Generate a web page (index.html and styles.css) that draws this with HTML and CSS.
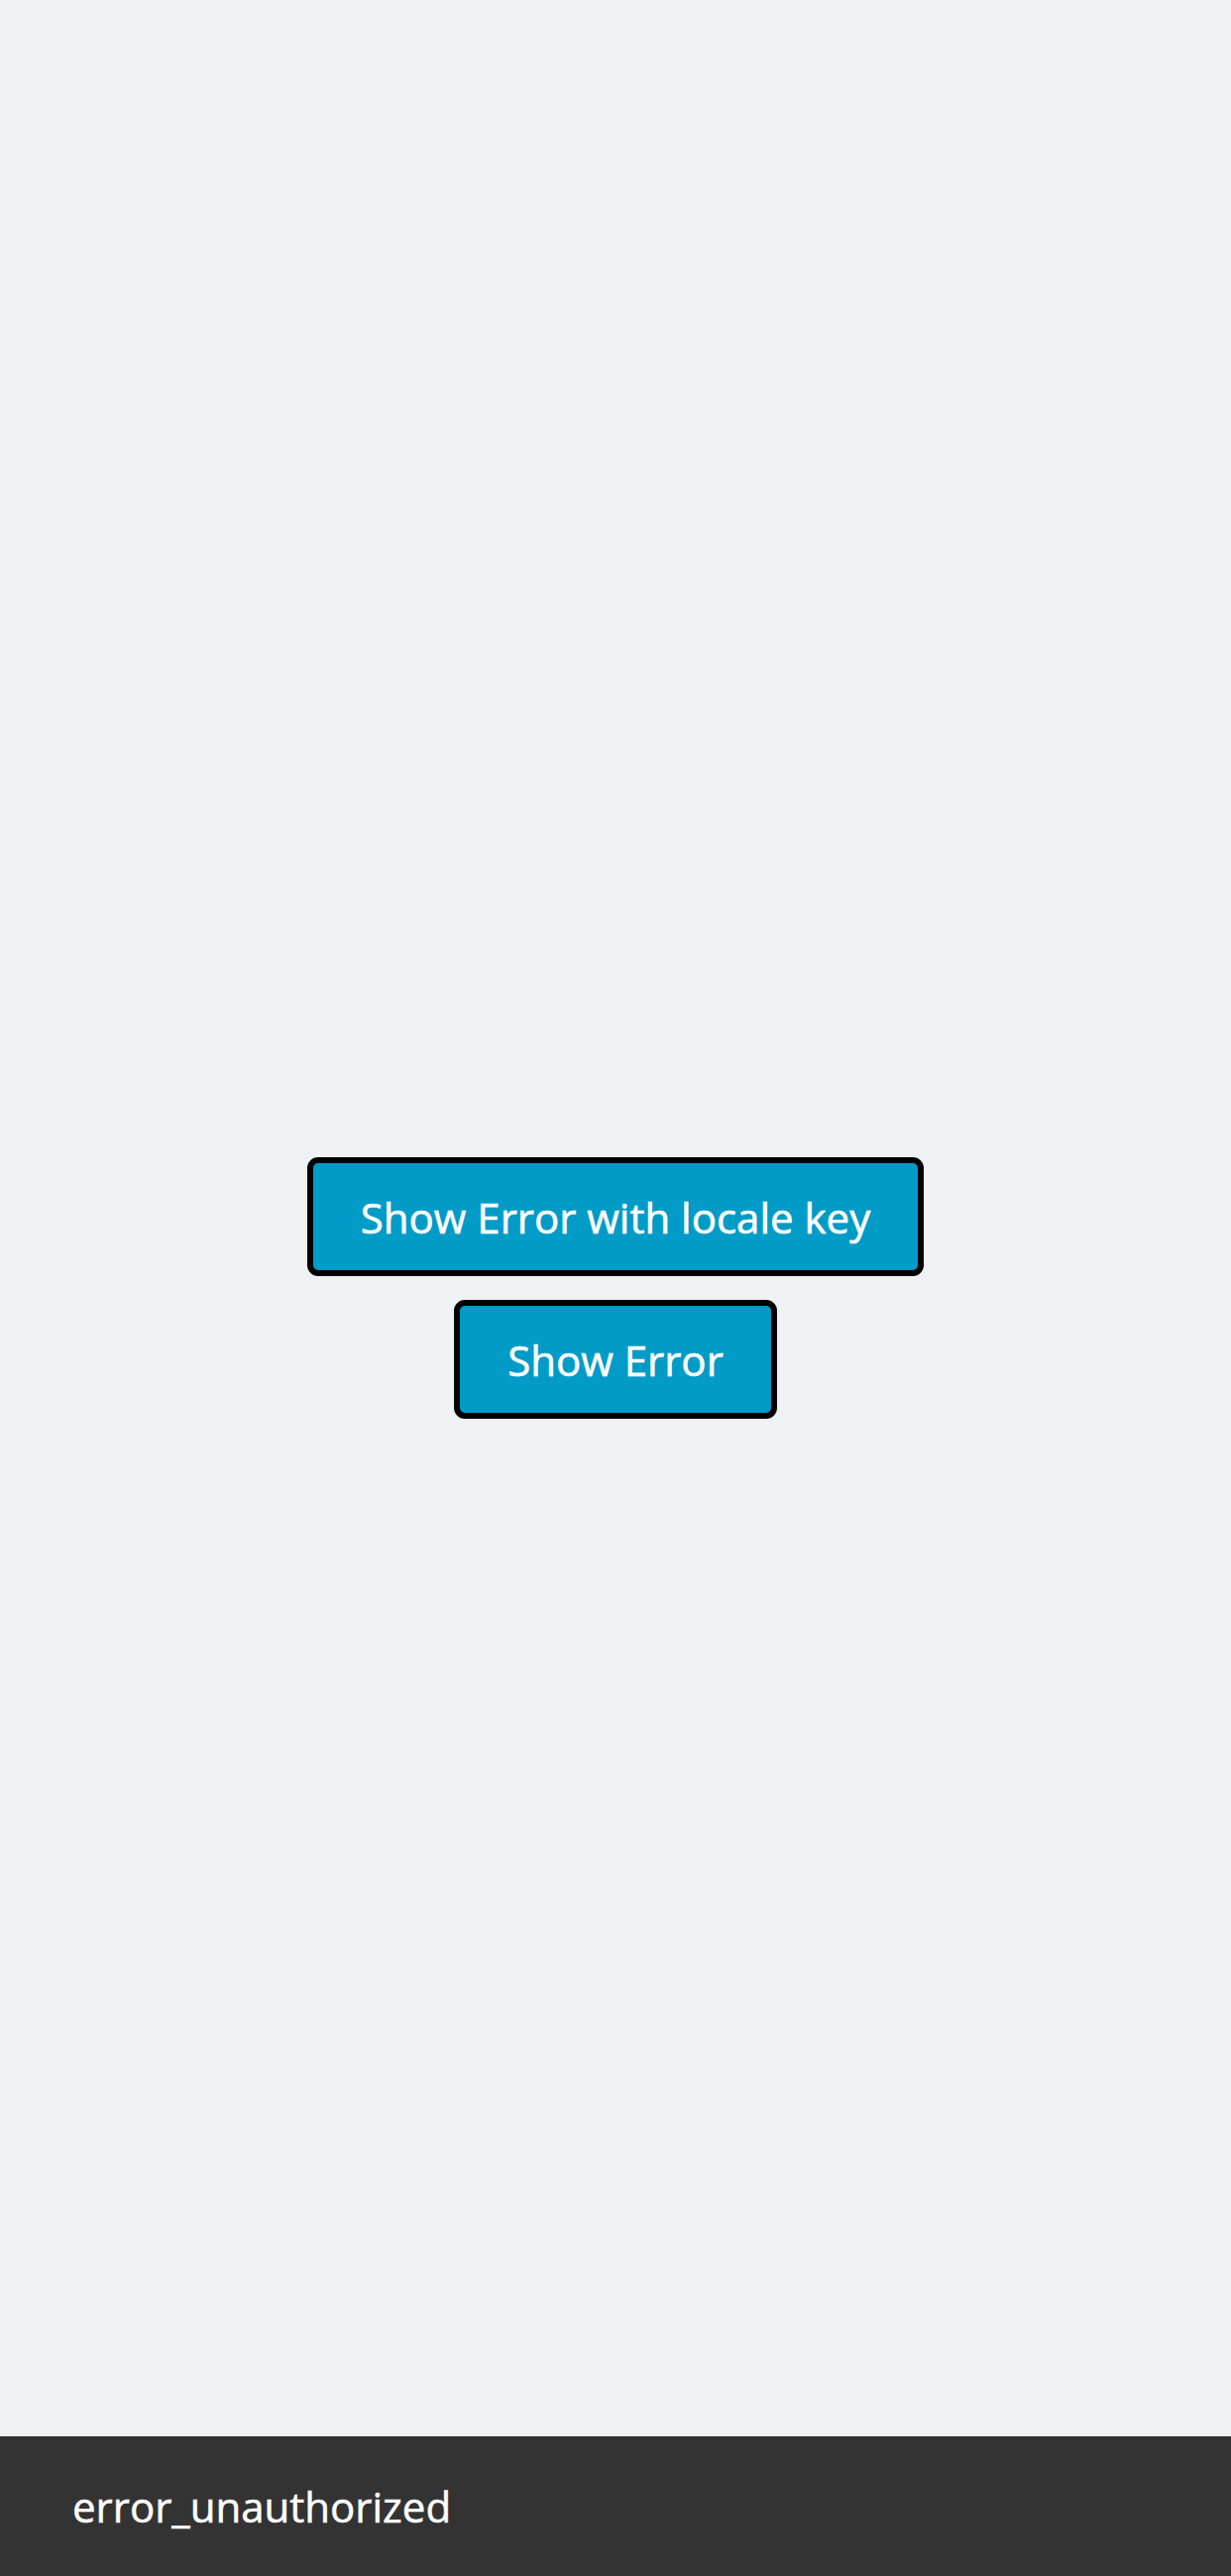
FILE: index.html
```html
<!DOCTYPE html>
<html>
<head>
<meta charset="utf-8">
<link rel="stylesheet" href="styles.css">
</head>
<body>
<main class="stage">
  <button class="btn">Show Error with locale key</button>
  <button class="btn">Show Error</button>
</main>
<div class="snackbar">error_unauthorized</div>
</body>
</html>
```
FILE: styles.css
```css
html, body {
  margin: 0;
  padding: 0;
}
body {
  background: #f0f1f3;
  font-family: "Open Sans", "Noto Sans", sans-serif;
  width: 1242px;
  height: 2600px;
  position: relative;
  overflow: hidden;
}
.stage {
  height: 2600px;
  display: flex;
  flex-direction: column;
  align-items: center;
  justify-content: center;
  gap: 24px;
}
.btn {
  box-sizing: border-box;
  height: 120px;
  padding: 0 48px;
  background: #009bc7;
  color: #ffffff;
  border: 6px solid #000000;
  border-radius: 11px;
  font-family: "Open Sans", "Noto Sans", sans-serif;
  font-size: 42px;
  font-weight: 400;
  -webkit-text-stroke: 0.6px #ffffff;
}
.snackbar {
  position: absolute;
  left: 0;
  right: 0;
  bottom: 0;
  height: 141px;
  background: #333333;
  color: #ffffff;
  display: flex;
  align-items: center;
  padding-left: 73px;
  font-size: 42px;
  -webkit-text-stroke: 0.5px #ffffff;
}
```
